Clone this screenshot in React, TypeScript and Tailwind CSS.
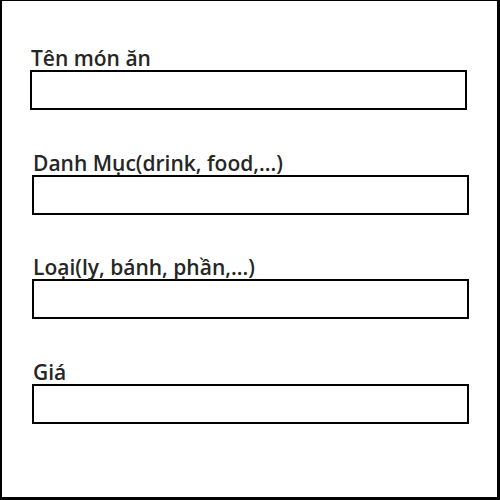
import React from 'react';

const fields = [
  { label: 'Tên món ăn', shift: false },
  { label: 'Danh Mục(drink, food,...)', shift: true },
  { label: 'Loại(ly, bánh, phần,...)', shift: true },
  { label: 'Giá', shift: true },
];

export default function App() {
  return (
    <div className="w-[500px] h-[500px] bg-white border-t border-l-2 border-r-[3px] border-b-[3px] border-black font-['Open_Sans',sans-serif]">
      <div className="flex flex-col gap-[40.6px] pt-[45px]">
        {fields.map((f) => (
          <div key={f.label} className={f.shift ? 'pl-[30px]' : 'pl-[28px]'}>
            <label className="block pl-[1px] text-[21px] leading-[24px] font-semibold text-[#262626]">
              {f.label}
            </label>
            <input className="block w-[437px] h-[40px] border-2 border-black bg-white outline-none" />
          </div>
        ))}
      </div>
    </div>
  );
}
